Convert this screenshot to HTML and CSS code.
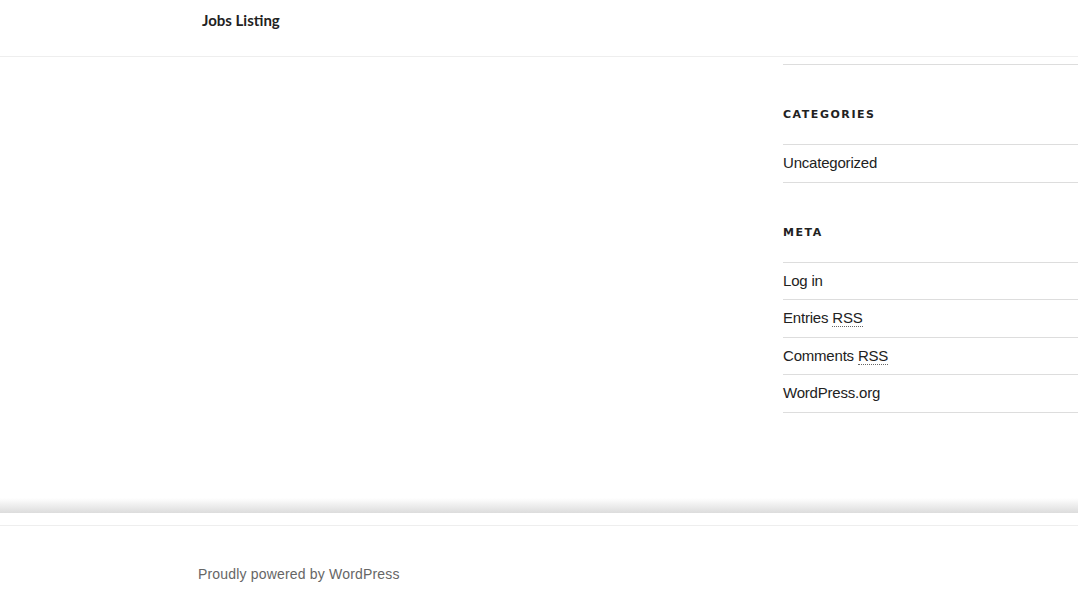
FILE: index.html
```html
<!DOCTYPE html>
<html lang="en">
<head>
<meta charset="utf-8">
<title>Jobs Listing</title>
<link rel="stylesheet" href="styles.css">
</head>
<body>
<header class="site-header">
  <div class="branding"><a class="site-title" href="#">Jobs Listing</a></div>
</header>
<div class="site-content">
  <main class="content-area"></main>
  <aside class="sidebar">
    <div class="widget-end"></div>
    <section class="widget">
      <h2 class="widget-title">Categories</h2>
      <ul class="widget-list">
        <li><a href="#">Uncategorized</a></li>
      </ul>
    </section>
    <section class="widget">
      <h2 class="widget-title">Meta</h2>
      <ul class="widget-list">
        <li><a href="#">Log in</a></li>
        <li><a href="#">Entries <abbr title="Really Simple Syndication">RSS</abbr></a></li>
        <li><a href="#">Comments <abbr title="Really Simple Syndication">RSS</abbr></a></li>
        <li><a href="#">WordPress.org</a></li>
      </ul>
    </section>
  </aside>
</div>
<div class="shade"></div>
<footer class="site-footer">
  <div class="site-info"><a href="#">Proudly powered by WordPress</a></div>
</footer>
</body>
</html>
```

FILE: styles.css
```css
html, body {
  margin: 0;
  padding: 0;
  background: #fff;
  overflow-x: hidden;
}
body {
  font-family: "Liberation Sans", Arial, sans-serif;
  color: #222;
  font-size: 15px;
}
a {
  color: inherit;
  text-decoration: none;
}
.site-header {
  height: 57px;
  border-bottom: 1px solid #eee;
  box-sizing: border-box;
}
.branding {
  padding-left: 202px;
  padding-top: 10px;
}
.site-title {
  font-family: Lato, "Liberation Sans", sans-serif;
  font-weight: 700;
  font-size: 15px;
  line-height: 20px;
  color: #222;
}
.site-content {
  display: flex;
}
.content-area {
  width: 783px;
  flex: none;
}
.sidebar {
  flex: 1;
  min-width: 320px;
}
.widget-end {
  height: 7px;
  border-bottom: 1px solid #ddd;
}
.widget {
  padding-top: 42px;
}
.widget-title {
  margin: 0 0 21px;
  font-family: "DejaVu Sans", "Liberation Sans", sans-serif;
  font-size: 11px;
  line-height: 16px;
  font-weight: 700;
  letter-spacing: 0.14em;
  text-transform: uppercase;
  color: #222;
}
.widget-list {
  list-style: none;
  margin: 0;
  padding: 0;
  border-top: 1px solid #ddd;
}
.widget-list li {
  border-bottom: 1px solid #ddd;
  padding: 7px 0;
  line-height: 22.5px;
  letter-spacing: -0.2px;
}
abbr {
  text-decoration: none;
  border-bottom: 1px dotted #666;
}
.shade {
  margin-top: 85px;
  height: 15px;
  background: linear-gradient(to bottom, #fff, #dcdcdc);
}
.site-footer {
  margin-top: 12px;
  border-top: 1px solid #eee;
  height: 82px;
}
.site-info {
  padding-left: 198px;
  padding-top: 37px;
  font-size: 14px;
  line-height: 22px;
  letter-spacing: 0.18px;
  color: #666;
}
```
